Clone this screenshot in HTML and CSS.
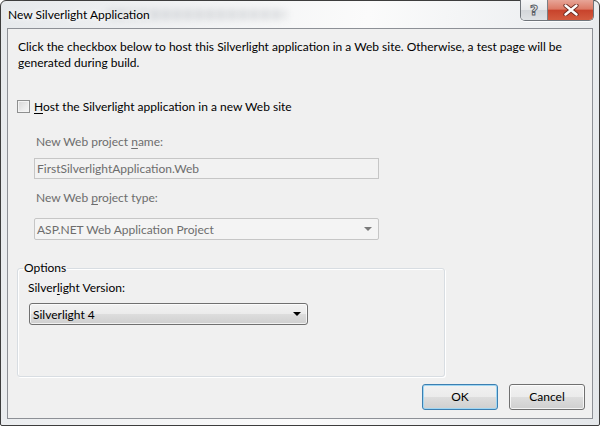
FILE: index.html
```html
<!DOCTYPE html>
<html>
<head>
<meta charset="utf-8">
<link rel="stylesheet" href="styles.css">
</head>
<body>
<div class="window">
  <div class="titlebar">
    <span class="ghost" aria-hidden="true"></span>
    <span class="title">New Silverlight Application</span>
    <div class="caption-btns">
      <div class="cap help"><span>?</span></div>
      <div class="cap close">
        <svg width="16" height="12" viewBox="0 0 16 12">
          <path d="M2.5 1.5 L13.5 10.5 M13.5 1.5 L2.5 10.5" stroke="#6b2a20" stroke-width="4.2" stroke-linecap="round"/>
          <path d="M2.5 1.5 L13.5 10.5 M13.5 1.5 L2.5 10.5" stroke="#ffffff" stroke-width="2.4" stroke-linecap="round"/>
        </svg>
      </div>
    </div>
  </div>
  <div class="client">
    <p class="intro">Click the checkbox below to host this Silverlight application in a Web site. Otherwise, a test page will be generated during build.</p>
    <div class="check-row">
      <span class="checkbox"></span>
      <span class="check-label"><u>H</u>ost the Silverlight application in a new Web site</span>
    </div>
    <div class="web-fields">
      <div class="field-label disabled">New Web project <u>n</u>ame:</div>
      <div class="textbox disabled">FirstSilverlightApplication.Web</div>
      <div class="field-label disabled second">New Web <u>p</u>roject type:</div>
      <div class="combo disabled">
        <span>ASP.NET Web Application Project</span>
        <span class="arrow arrow-disabled"></span>
      </div>
    </div>
    <fieldset class="options">
      <legend>Options</legend>
      <div class="field-label version">Silver<u>l</u>ight Version:</div>
      <div class="combo active">
        <span>Silverlight 4</span>
        <span class="arrow"></span>
      </div>
    </fieldset>
    <div class="buttons">
      <div class="btn default">OK</div>
      <div class="btn">Cancel</div>
    </div>
  </div>
</div>
</body>
</html>
```
FILE: styles.css
```css
html, body {
  margin: 0;
  padding: 0;
}
body {
  width: 600px;
  height: 426px;
  overflow: hidden;
  background: #ffffff;
  font-family: Lato, "Noto Sans", sans-serif;
  font-size: 12px;
  color: #000;
}
u { text-decoration: underline; text-underline-offset: 2px; }

.window {
  box-sizing: border-box;
  width: 600px;
  height: 426px;
  border: 1px solid #3d3d3d;
  border-radius: 6px 6px 2px 2px;
  background: linear-gradient(100deg, #e6e9ec 0%, #f2f3f4 30%, #fbfbfb 55%, #eef0f2 80%, #e4e7ea 100%);
  display: flex;
  flex-direction: column;
  padding: 0 6px 6px 6px;
  position: relative;
}

.titlebar {
  height: 27px;
  display: flex;
  align-items: flex-start;
  position: relative;
}
.title {
  position: relative;
  margin-top: 6px;
  margin-left: 1px;
  font-size: 12px;
  line-height: 16px;
  color: #000;
  text-shadow: 0 0 8px #ffffff, 0 0 4px #ffffff;
}
.ghost {
  position: absolute;
  left: 100px;
  top: 8px;
  width: 180px;
  height: 11px;
  border-radius: 5px;
  background: repeating-linear-gradient(90deg, #9aa0a7 0px, #9aa0a7 8px, transparent 8px, transparent 11px);
  filter: blur(3.5px);
  opacity: 0.3;
}
.caption-btns {
  margin-left: auto;
  margin-right: -1px;
  margin-top: -1px;
  display: flex;
  height: 20px;
  border: 1px solid #6f747a;
  border-top: none;
  border-radius: 0 0 5px 5px;
  overflow: hidden;
  box-shadow: 0 1px 0 rgba(255,255,255,0.8);
}
.cap {
  height: 20px;
  display: flex;
  align-items: center;
  justify-content: center;
}
.help {
  width: 26px;
  background: linear-gradient(#f4f5f6 0%, #e6e8ea 50%, #d3d6da 51%, #dfe2e5 100%);
  border-right: 1px solid #7a7f85;
}
.help span {
  font-family: "DejaVu Sans", sans-serif;
  font-size: 14px;
  font-weight: bold;
  color: #f7f7f7;
  -webkit-text-stroke: 1px #5b6168;
  line-height: 14px;
}
.close {
  width: 45px;
  background: linear-gradient(#e7a597 0%, #dc7a66 45%, #c8432c 52%, #d35b3f 100%);
}

.client {
  flex: 1;
  box-sizing: border-box;
  background: #f0f0f0;
  border: 1px solid #8d9096;
  padding: 10px 7px 8px 9px;
  display: flex;
  flex-direction: column;
}

.intro {
  margin: 0;
  line-height: 16px;
  padding-left: 1px;
  width: 560px;
}

.check-row {
  margin-top: 27px;
  display: flex;
  align-items: center;
  height: 16px;
}
.checkbox {
  width: 11px;
  height: 11px;
  border: 1px solid #8e8f8f;
  background: linear-gradient(135deg, #d6d6d6 0%, #ececec 60%, #f6f6f6 100%);
  box-shadow: inset 0 0 0 1px #f4f4f4;
  margin-left: 0;
  margin-right: 4px;
}

.web-fields {
  padding-left: 17px;
  display: flex;
  flex-direction: column;
}
.field-label {
  line-height: 16px;
  margin-left: 2px;
}
.field-label.disabled {
  color: #6d6d6d;
  margin-top: 20px;
}
.field-label.second {
  margin-top: 11px;
}
.textbox {
  margin-top: 8px;
  box-sizing: border-box;
  width: 345px;
  height: 21px;
  border: 1px solid #c6c6c6;
  background: #f2f2f2;
  color: #6d6d6d;
  line-height: 19px;
  padding-left: 2px;
}
.combo {
  box-sizing: border-box;
  display: flex;
  align-items: center;
  justify-content: space-between;
  padding: 0 6px 0 2px;
}
.combo.disabled {
  margin-top: 12px;
  width: 345px;
  height: 22px;
  border: 1px solid #c6c6c6;
  background: #f4f4f4;
  color: #6d6d6d;
  border-radius: 2px;
}
.arrow {
  width: 0;
  height: 0;
  border-left: 4px solid transparent;
  border-right: 4px solid transparent;
  border-top: 4px solid #000;
}
.arrow-disabled {
  border-top-color: #7a7a7a;
}

.options {
  margin: 20px 0 0 0;
  padding: 0 10px 0 10px;
  width: 428px;
  box-sizing: border-box;
  height: 117px;
  border: 1px solid #d8dde2;
  border-radius: 3px;
  box-shadow: inset 1px 1px 0 #ffffff, 1px 1px 0 #ffffff;
}
.options legend {
  padding: 0 1px;
  margin-left: -5px;
  line-height: 16px;
}
.field-label.version {
  margin-top: 4px;
  margin-left: 0;
}
.combo.active {
  margin-top: 7px;
  margin-left: 1px;
  width: 279px;
  height: 22px;
  border: 1px solid #707070;
  border-radius: 3px;
  background: linear-gradient(#f2f2f2 0%, #ebebeb 50%, #dddddd 51%, #cfcfcf 100%);
  box-shadow: inset 0 0 0 1px rgba(255,255,255,0.7);
  padding-left: 3px;
}

.buttons {
  margin-top: auto;
  display: flex;
  justify-content: flex-end;
  gap: 11px;
}
.btn {
  box-sizing: border-box;
  width: 76px;
  height: 26px;
  border: 1px solid #707070;
  border-radius: 3px;
  background: linear-gradient(#f2f2f2 0%, #ebebeb 50%, #dddddd 51%, #cfcfcf 100%);
  box-shadow: inset 0 0 0 1px rgba(255,255,255,0.75);
  display: flex;
  align-items: center;
  justify-content: center;
  line-height: 16px;
}
.btn.default {
  border-color: #3c7fb1;
  box-shadow: inset 0 0 0 1px #9fd6f3;
}
```
